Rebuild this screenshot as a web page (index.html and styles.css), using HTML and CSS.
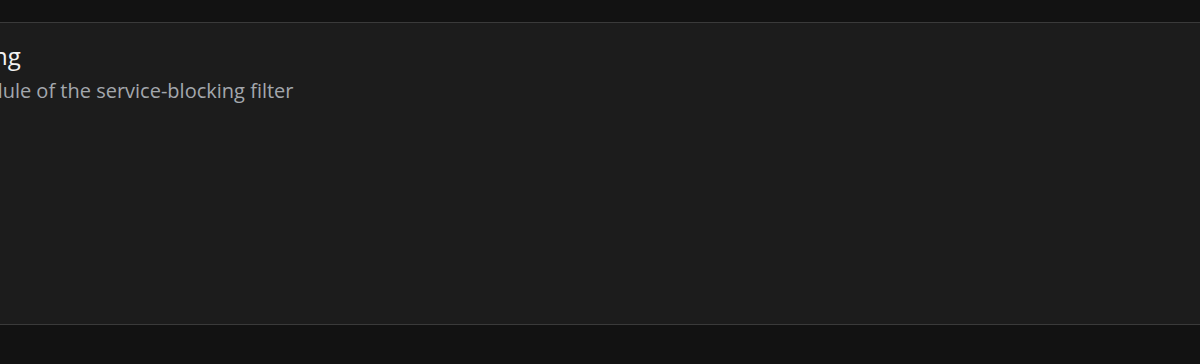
FILE: index.html
```html
<!DOCTYPE html>
<html lang="en">
<head>
<meta charset="utf-8">
<title>Pause service blocking</title>
<link rel="stylesheet" href="styles.css">
</head>
<body>
<div class="topbar"></div>
<section class="panel">
  <div class="panel-header">
    <h2 class="panel-title">Pause service blocking</h2>
    <p class="panel-desc">Configure the pause schedule of the service-blocking filter</p>
  </div>
</section>
<div class="bottombar"></div>
</body>
</html>
```
FILE: styles.css
```css
html, body {
  margin: 0;
  padding: 0;
}
body {
  background: #121212;
  font-family: "Open Sans", "Noto Sans", sans-serif;
  overflow: hidden;
  height: 364px;
}
.topbar {
  height: 22px;
  background: #121212;
}
.panel {
  background: #1c1c1c;
  border-top: 1px solid #3a3a3a;
  border-bottom: 1px solid #3a3a3a;
  height: 303px;
  box-sizing: border-box;
  overflow: hidden;
}
.panel-header {
  margin-left: -230px;
  padding-top: 17px;
  white-space: nowrap;
}
.panel-title {
  margin: 0;
  font-size: 24px;
  line-height: 32px;
  font-weight: 400;
  color: #f2f2f2;
}
.panel-desc {
  margin: 5px 0 0;
  text-indent: -16px;
  font-size: 20px;
  line-height: 28px;
  color: #a3a7ad;
}
.bottombar {
  height: 39px;
  background: #121212;
}
```
